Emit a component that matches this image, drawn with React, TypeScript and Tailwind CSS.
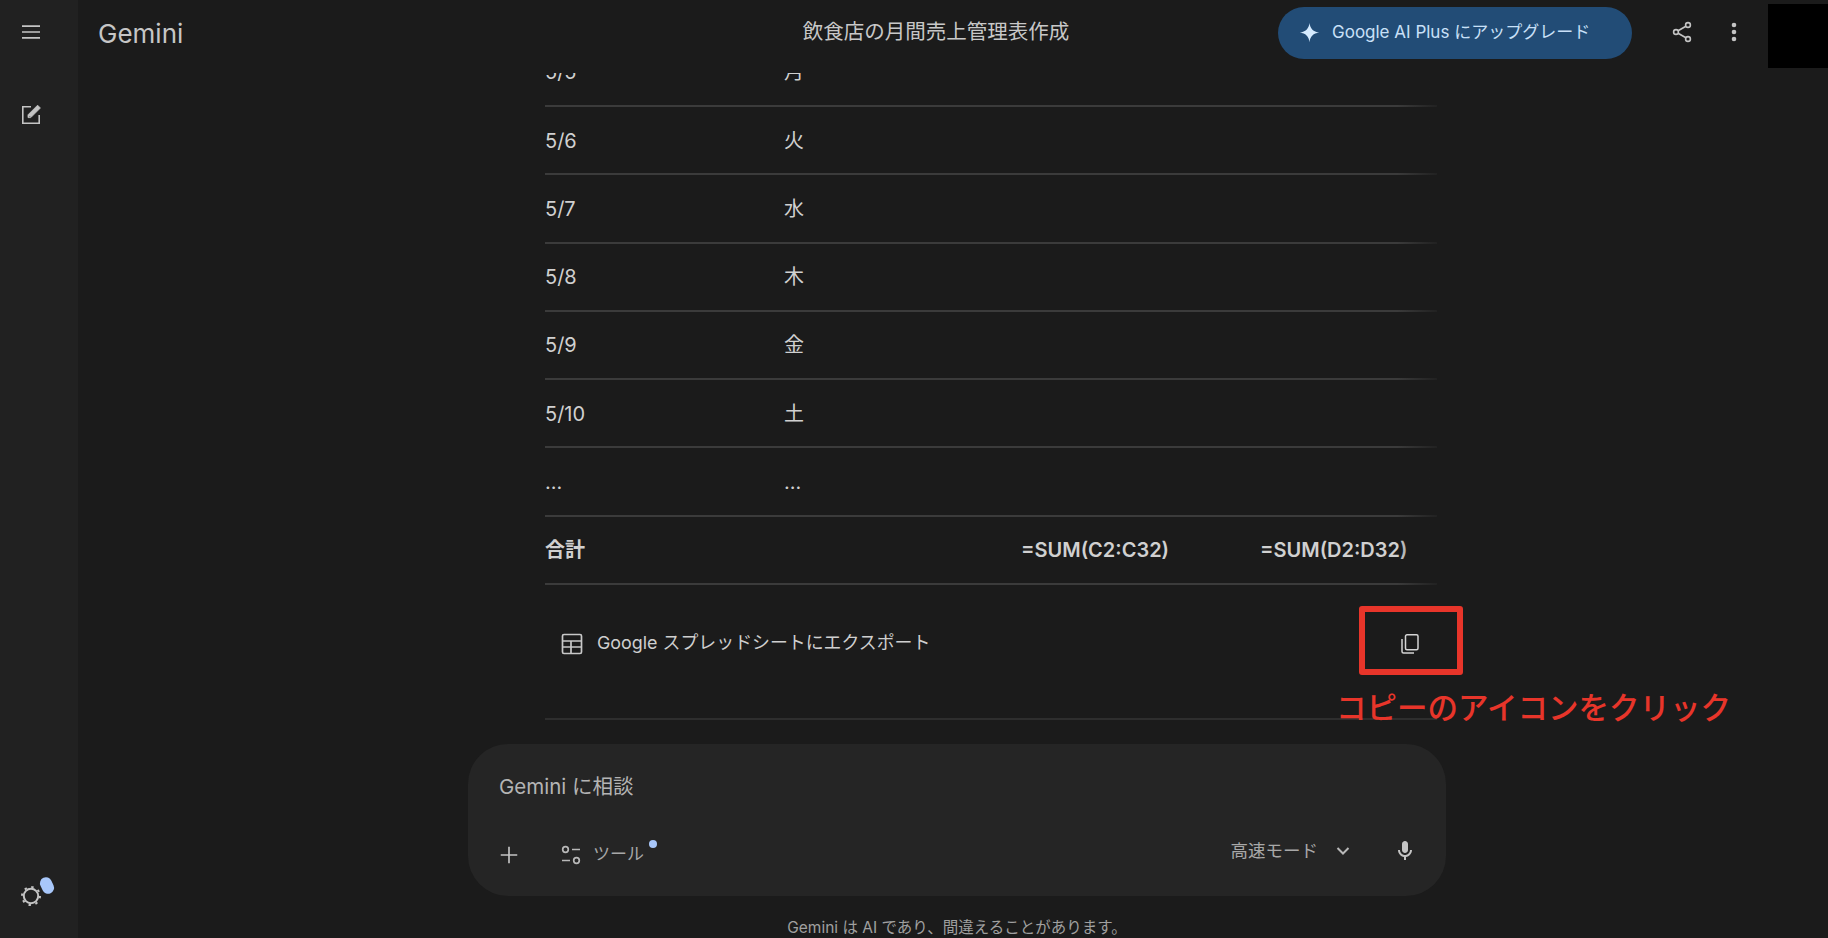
const rows = [
  ['5/5', '月'],
  ['5/6', '火'],
  ['5/7', '水'],
  ['5/8', '木'],
  ['5/9', '金'],
  ['5/10', '土'],
  ['...', '...'],
]

const font = "font-['Inter','Noto_Sans_CJK_JP',sans-serif]"

function Sidebar() {
  return (
    <aside className="w-[78px] shrink-0 bg-[#212121] flex flex-col items-center pr-4">
      <div className="h-[64px] flex items-center justify-center">
        <svg width="24" height="24" viewBox="0 0 24 24" fill="none" stroke="#c4c4c4" strokeWidth="1.7">
          <path d="M3 6.200h18M3 12h18M3 17.800h18" />
        </svg>
      </div>
      <div className="mt-[38px]">
        <svg width="24" height="24" viewBox="0 0 24 24" fill="none" stroke="#c4c4c4" strokeWidth="1.6">
          <path d="M12 4.800H3.800v16.400h16.400V13" />
          <path d="M9 15.600v-2.800L18.600 3.200l2.800 2.800-9.600 9.600z" fill="#c4c4c4" strokeWidth="0.8" />
          <path d="M10.500 14.200l1 1" stroke="#212121" strokeWidth="0.6" />
        </svg>
      </div>
      <div className="mt-auto mb-[30px] relative w-6 h-6">
        <svg width="24" height="24" viewBox="0 0 24 24" fill="none" stroke="#c4c4c4">
          <circle cx="12" cy="12" r="7.200" strokeWidth="2" />
          <circle cx="12" cy="12" r="9" strokeWidth="2" strokeDasharray="2.400 4.670" />
        </svg>
        <span className="absolute left-[22px] top-[-7px] w-[12px] h-[17px] rounded-full bg-[#a8c7fa] rotate-[-25deg]" />
      </div>
    </aside>
  )
}

function Header() {
  return (
    <header className="h-[73px] shrink-0 pb-[9px] pl-5 pr-[82px] flex items-center text-[#c8c8c8]">
      <div className="w-[700px] mt-[3px] text-[26px] font-normal text-[#c6c6c6]">Gemini</div>
      <div className="w-[276px] text-center text-[20.5px] whitespace-nowrap">飲食店の月間売上管理表作成</div>
      <button className="ml-auto mt-[1px] h-[52px] w-[354px] rounded-full bg-[#224c76] flex items-center pl-[21px] text-[#c9e0f8] text-[17px] whitespace-nowrap">
        <svg width="21" height="21" viewBox="0 0 24 24" fill="#d6ebff">
          <path d="M12 1C12.800 7.500 16.500 11.200 23 12C16.500 12.800 12.800 16.500 12 23C11.200 16.500 7.500 12.800 1 12C7.500 11.200 11.200 7.500 12 1Z" />
        </svg>
        <span className="ml-[12px]">Google AI Plus にアップグレード</span>
      </button>
      <svg className="ml-[38px]" width="24" height="24" viewBox="0 0 24 24" fill="none" stroke="#c4c4c4" strokeWidth="1.6">
        <circle cx="18" cy="5" r="2.400" />
        <circle cx="6" cy="12" r="2.400" />
        <circle cx="18" cy="19" r="2.400" />
        <path d="M8.100 10.800l7.800-4.600M8.100 13.200l7.800 4.600" />
      </svg>
      <svg className="ml-[28px]" width="24" height="24" viewBox="0 0 24 24" fill="#c4c4c4">
        <circle cx="12" cy="5" r="2.300" />
        <circle cx="12" cy="12" r="2.300" />
        <circle cx="12" cy="19" r="2.300" />
      </svg>
    </header>
  )
}

function Table() {
  return (
    <div className="relative ml-[467px] w-[892px] text-[20px] text-[#d0d0d0]">
      {rows.map((r) => (
        <div key={r[0] + r[1]} className="h-[68.3px] pt-px grid grid-cols-[239px_237px_239px_1fr] items-center border-b-2 border-[#3b3b3b]">
          <div>{r[0]}</div>
          <div>{r[1]}</div>
        </div>
      ))}
      <div className="h-[68.3px] grid grid-cols-[239px_237px_239px_1fr] items-center border-b-2 border-[#3b3b3b] font-semibold">
        <div>合計</div>
        <div />
        <div>=SUM(C2:C32)</div>
        <div>=SUM(D2:D32)</div>
      </div>
      <div className="absolute top-0 right-0 bottom-[135px] w-[40px] bg-gradient-to-r from-transparent to-[#1b1b1b]/80" />

      <div className="relative h-[135px] border-b-2 border-[#2e2e2e]">
        <div className="h-[118px] flex items-center pl-[15px] text-[#cfcfcf]">
          <svg width="24" height="24" viewBox="0 0 24 24" fill="none" stroke="#c8c8c8" strokeWidth="1.7">
            <rect x="2.500" y="2.500" width="19" height="19" rx="1.500" />
            <path d="M2.500 9h19M2.500 15h19M11 9v12.500" />
          </svg>
          <span className="ml-[13px] mb-[2px] text-[17.9px]">Google スプレッドシートにエクスポート</span>
          <svg className="ml-auto mr-[15px]" width="24" height="24" viewBox="0 0 24 24" fill="none" stroke="#d4d4d4" strokeWidth="1.5">
            <rect x="7.500" y="2.800" width="12.500" height="15" rx="1.500" />
            <path d="M4 7v12.500A1.500 1.500 0 0 0 5.500 21H16" />
          </svg>
        </div>
        <div className="absolute left-[814px] top-[21px] w-[104px] h-[69px] border-[6px] border-[#e8352a] rounded-[3px]" />
        <div className="absolute left-[791px] top-[102px] text-[30.5px] leading-[42px] font-medium text-[#e8352a] whitespace-nowrap">
          コピーのアイコンをクリック
        </div>
      </div>
    </div>
  )
}

function Prompt() {
  return (
    <div className="ml-[390px] w-[978px] h-[152px] shrink-0 rounded-[40px] bg-[#252525] pl-[31px] pr-[29px] pt-[29px] flex flex-col">
      <div className="text-[20.5px] leading-[28px] text-[#b4b4b4]">Gemini に相談</div>
      <div className="mt-auto mb-[25px] flex items-center h-[32px] text-[#a8a8a8]">
        <svg className="ml-[-1px]" width="22" height="22" viewBox="0 0 24 24" fill="none" stroke="#c4c4c4" strokeWidth="1.8">
          <path d="M12 3v18M3 12h18" />
        </svg>
        <svg className="ml-[39px]" width="24" height="24" viewBox="0 0 24 24" fill="none" stroke="#b8b8b8" strokeWidth="1.7">
          <circle cx="6.500" cy="6.500" r="2.800" />
          <path d="M13 6.500h8M3 17.500h8" />
          <circle cx="17.500" cy="17.500" r="2.800" />
        </svg>
        <div className="relative ml-[10px] text-[17px]">
          ツール
          <span className="absolute right-[-13px] top-[-2px] w-2 h-2 rounded-full bg-[#a8c7fa]" />
        </div>
        <div className="ml-auto mb-[8px] text-[17.5px]">高速モード</div>
        <svg className="ml-[13px] mb-[8px]" width="24" height="24" viewBox="0 0 24 24" fill="none" stroke="#b8b8b8" strokeWidth="2">
          <path d="M6.500 9l5.500 5.500L17.500 9" />
        </svg>
        <svg className="ml-[38px] mb-[8px]" width="24" height="24" viewBox="0 0 24 24" fill="#c4c4c4">
          <path d="M12 14c1.660 0 3-1.340 3-3V5c0-1.660-1.340-3-3-3S9 3.340 9 5v6c0 1.660 1.340 3 3 3zm5-3c0 2.760-2.240 5-5 5s-5-2.240-5-5H5c0 3.530 2.610 6.430 6 6.920V21h2v-3.080c3.390-.490 6-3.390 6-6.920h-2z" />
        </svg>
      </div>
    </div>
  )
}

export default function App() {
  return (
    <div className={`${font} h-[938px] w-full flex overflow-hidden bg-[#1b1b1b]`}>
      <Sidebar />
      <main className="relative flex-1 min-w-0 flex flex-col">
        <Header />
        <div className="flex-1 min-h-0 overflow-hidden flex flex-col justify-end pb-[24px]">
          <Table />
        </div>
        <Prompt />
        <div className="h-[42px] shrink-0 pt-[23px] pl-[8px] text-center text-[15.5px] leading-[18px] text-[#a0a0a0]">
          Gemini は AI であり、間違えることがあります。
        </div>
        <div className="absolute top-1 right-0 w-[60px] h-[64px] bg-black" />
      </main>
    </div>
  )
}
